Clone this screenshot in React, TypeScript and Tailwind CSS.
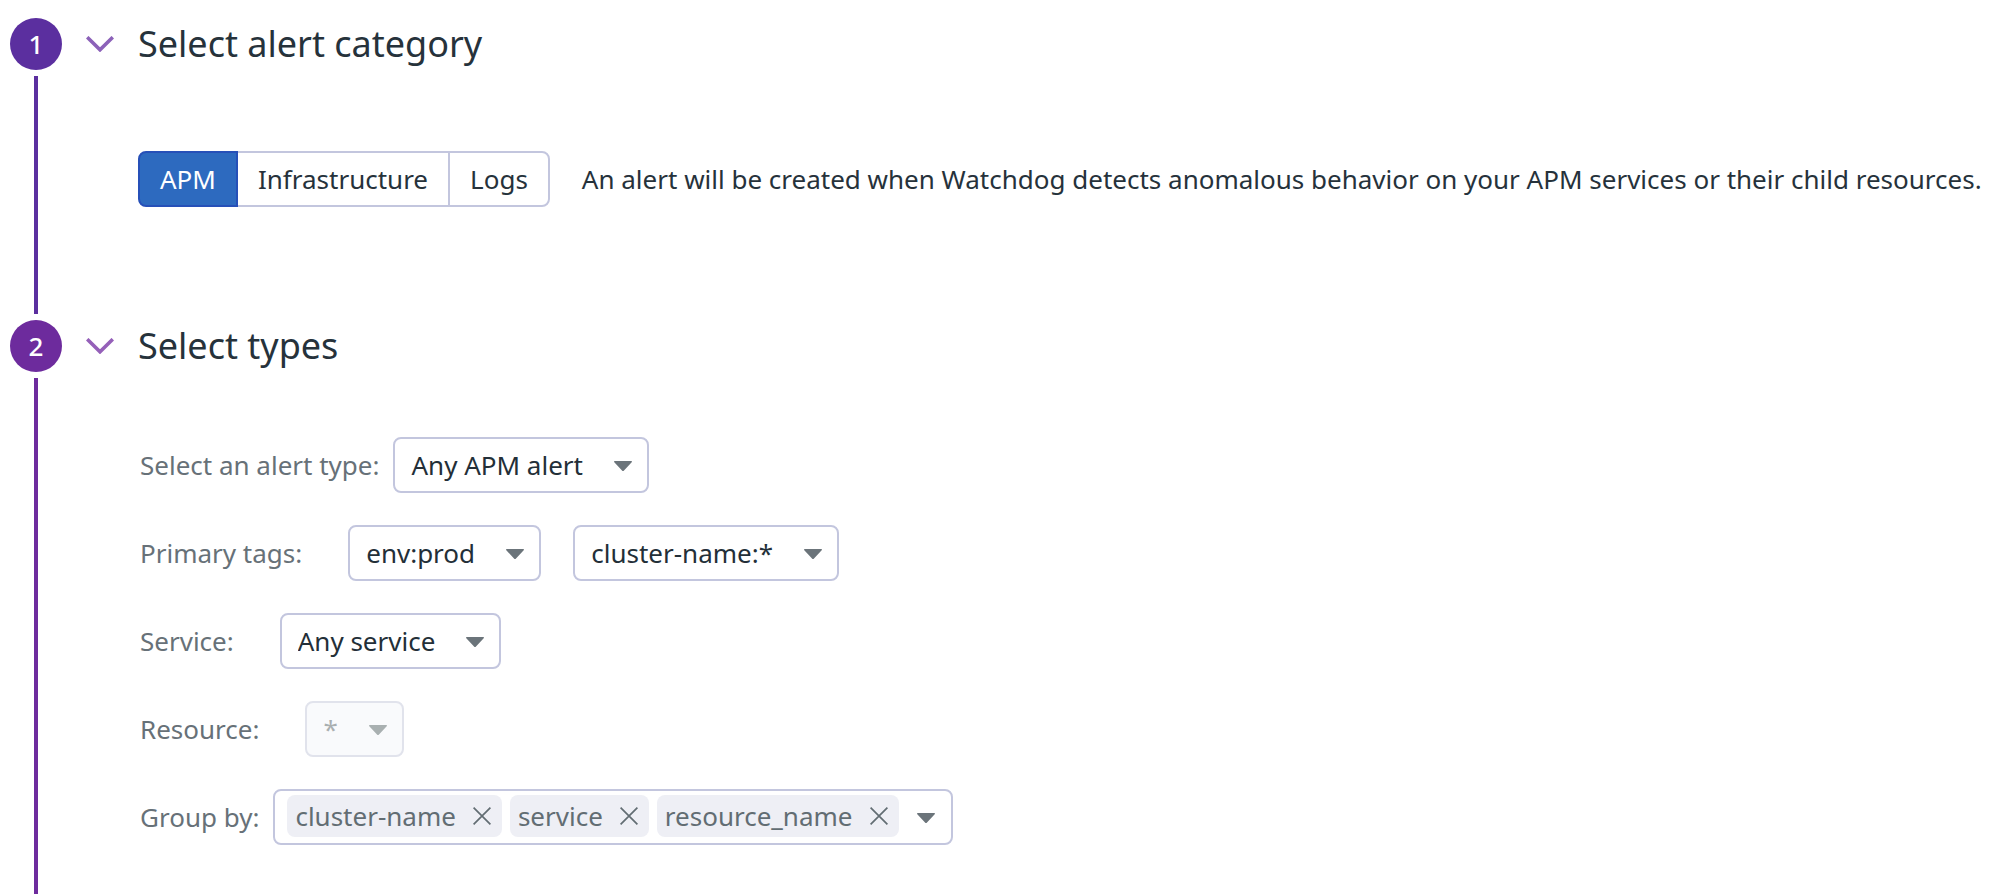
import { useState, type ReactNode } from "react";

function Caret({ className = "" }: { className?: string }) {
  return (
    <svg viewBox="0 0 18 10" className={`h-[10px] w-[18px] shrink-0 ${className}`} fill="currentColor" aria-hidden="true">
      <path d="M.7 0h16.6c.7 0 .9.8.4 1.3L10 9.4c-.6.7-1.4.7-2 0L.3 1.3C-.2.8 0 0 .7 0Z" />
    </svg>
  );
}

type StepProps = {
  number: number;
  title: string;
  badge: string;
  line: string;
  chevron: string;
  grow?: boolean;
  children: ReactNode;
};

function Step({ number, title, badge, line, chevron, grow, children }: StepProps) {
  const [open, setOpen] = useState(true);
  return (
    <section className={`flex gap-6 ${grow ? "grow" : ""}`}>
      <div className="flex w-[52px] shrink-0 flex-col items-center gap-[6px]">
        <span className={`flex h-[52px] w-[52px] shrink-0 items-center justify-center rounded-full text-[26px] font-medium text-white ${badge}`}>
          {number}
        </span>
        <span className={`w-1 grow ${line} ${grow ? "" : "mb-[6px]"}`} />
      </div>
      <div className="flex min-w-0 grow flex-col">
        <h2 className="text-[36px] leading-[52px]">
          <button type="button" aria-expanded={open} onClick={() => setOpen(!open)} className="flex items-center gap-6">
            <svg viewBox="0 0 28 16" className={`h-4 w-7 shrink-0 ${chevron}`} fill="none" stroke="currentColor" strokeWidth="3.6" aria-hidden="true">
              <path d="M1.2 1.2 14 13.8 26.8 1.2" />
            </svg>
            {title}
          </button>
        </h2>
        {open && children}
      </div>
    </section>
  );
}

type SelectProps = { id: string; value: string; width: string; label?: string; disabled?: boolean };

function Select({ id, value, width, label, disabled }: SelectProps) {
  return (
    <div className={`relative ${width}`}>
      <select
        id={id}
        aria-label={label}
        disabled={disabled}
        className="h-14 w-full appearance-none rounded-lg border-2 border-[#c3c6de] bg-white pr-12 pl-4 text-[#232f38] disabled:border-[#e1e3ec] disabled:bg-[#f9fafc] disabled:text-[#a9afb1] disabled:opacity-100"
      >
        <option>{value}</option>
      </select>
      <Caret className={`pointer-events-none absolute top-6 right-[17px] ${disabled ? "text-[#a9b0b1]" : "text-[#6b747a]"}`} />
    </div>
  );
}

function Row({ label, htmlFor, gap, children }: { label: string; htmlFor: string; gap: string; children: ReactNode }) {
  return (
    <div className={`flex items-center ${gap}`}>
      <label htmlFor={htmlFor} className="whitespace-nowrap text-[#677178]">
        {label}
      </label>
      {children}
    </div>
  );
}

const categories = ["APM", "Infrastructure", "Logs"];

export default function App() {
  const [category, setCategory] = useState("APM");
  const [groups, setGroups] = useState(["cluster-name", "service", "resource_name"]);

  return (
    <main className="flex min-h-screen flex-col bg-white pt-[18px] pl-[10px] font-['Noto_Sans',sans-serif] text-[26px] leading-9 text-[#26323b]">
      <Step number={1} title="Select alert category" badge="bg-[#5b2f9f]" line="bg-[#5b2f9f]" chevron="text-[#8c62b9]">
        <div className="flex items-center gap-8 pt-[81px] pb-[113px] pl-[52px]">
          <div className="flex shrink-0">
            {categories.map((name) => (
              <button
                key={name}
                type="button"
                aria-pressed={category === name}
                onClick={() => setCategory(name)}
                className={`-ml-[2px] h-14 border-2 px-5 first:ml-0 first:rounded-l-lg last:rounded-r-lg ${
                  category === name ? "z-10 border-[#2650b8] bg-[#2d6abf] text-white" : "border-[#c3c6de] bg-white"
                }`}
              >
                {name}
              </button>
            ))}
          </div>
          <p>An alert will be created when Watchdog detects anomalous behavior on your APM services or their child resources.</p>
        </div>
      </Step>

      <Step number={2} title="Select types" badge="bg-[#6d2b9d]" line="bg-[#6d2b9d]" chevron="text-[#9560b9]" grow>
        <div className="flex flex-col gap-8 pt-[65px] pb-12 pl-[54px]">
          <Row label="Select an alert type:" htmlFor="alert-type" gap="gap-[14px]">
            <Select id="alert-type" value="Any APM alert" width="w-[256px]" />
          </Row>
          <Row label="Primary tags:" htmlFor="env" gap="gap-[46px]">
            <div className="flex gap-8">
              <Select id="env" value="env:prod" width="w-[193px]" />
              <Select id="cluster" label="Cluster name" value="cluster-name:*" width="w-[266px]" />
            </div>
          </Row>
          <Row label="Service:" htmlFor="service" gap="gap-[46px]">
            <Select id="service" value="Any service" width="w-[221px]" />
          </Row>
          <Row label="Resource:" htmlFor="resource" gap="gap-[46px]">
            <Select id="resource" value="*" width="w-[99px]" disabled />
          </Row>
          <Row label="Group by:" htmlFor="group-by" gap="gap-[14px]">
            <div className="flex h-14 items-start gap-2 rounded-lg border-2 border-[#c3c6de] pt-1 pr-4 pl-3">
              {groups.map((name) => (
                <span key={name} className="flex h-[42px] items-center gap-[17px] rounded-lg bg-[#eeeff5] pr-[11px] pl-2 text-[#626d73]">
                  {name}
                  <button type="button" aria-label={`Remove ${name}`} onClick={() => setGroups(groups.filter((g) => g !== name))}>
                    <svg viewBox="0 0 18 18" className="h-[18px] w-[18px]" fill="none" stroke="currentColor" strokeWidth="1.7" aria-hidden="true">
                      <path d="m.6.6 16.8 16.8M17.4.6.6 17.4" />
                    </svg>
                  </button>
                </span>
              ))}
              <button id="group-by" type="button" aria-label="Group by options" className="ml-[10px] flex h-[46px] items-center text-[#6b747a]">
                <Caret />
              </button>
            </div>
          </Row>
        </div>
      </Step>
    </main>
  );
}
